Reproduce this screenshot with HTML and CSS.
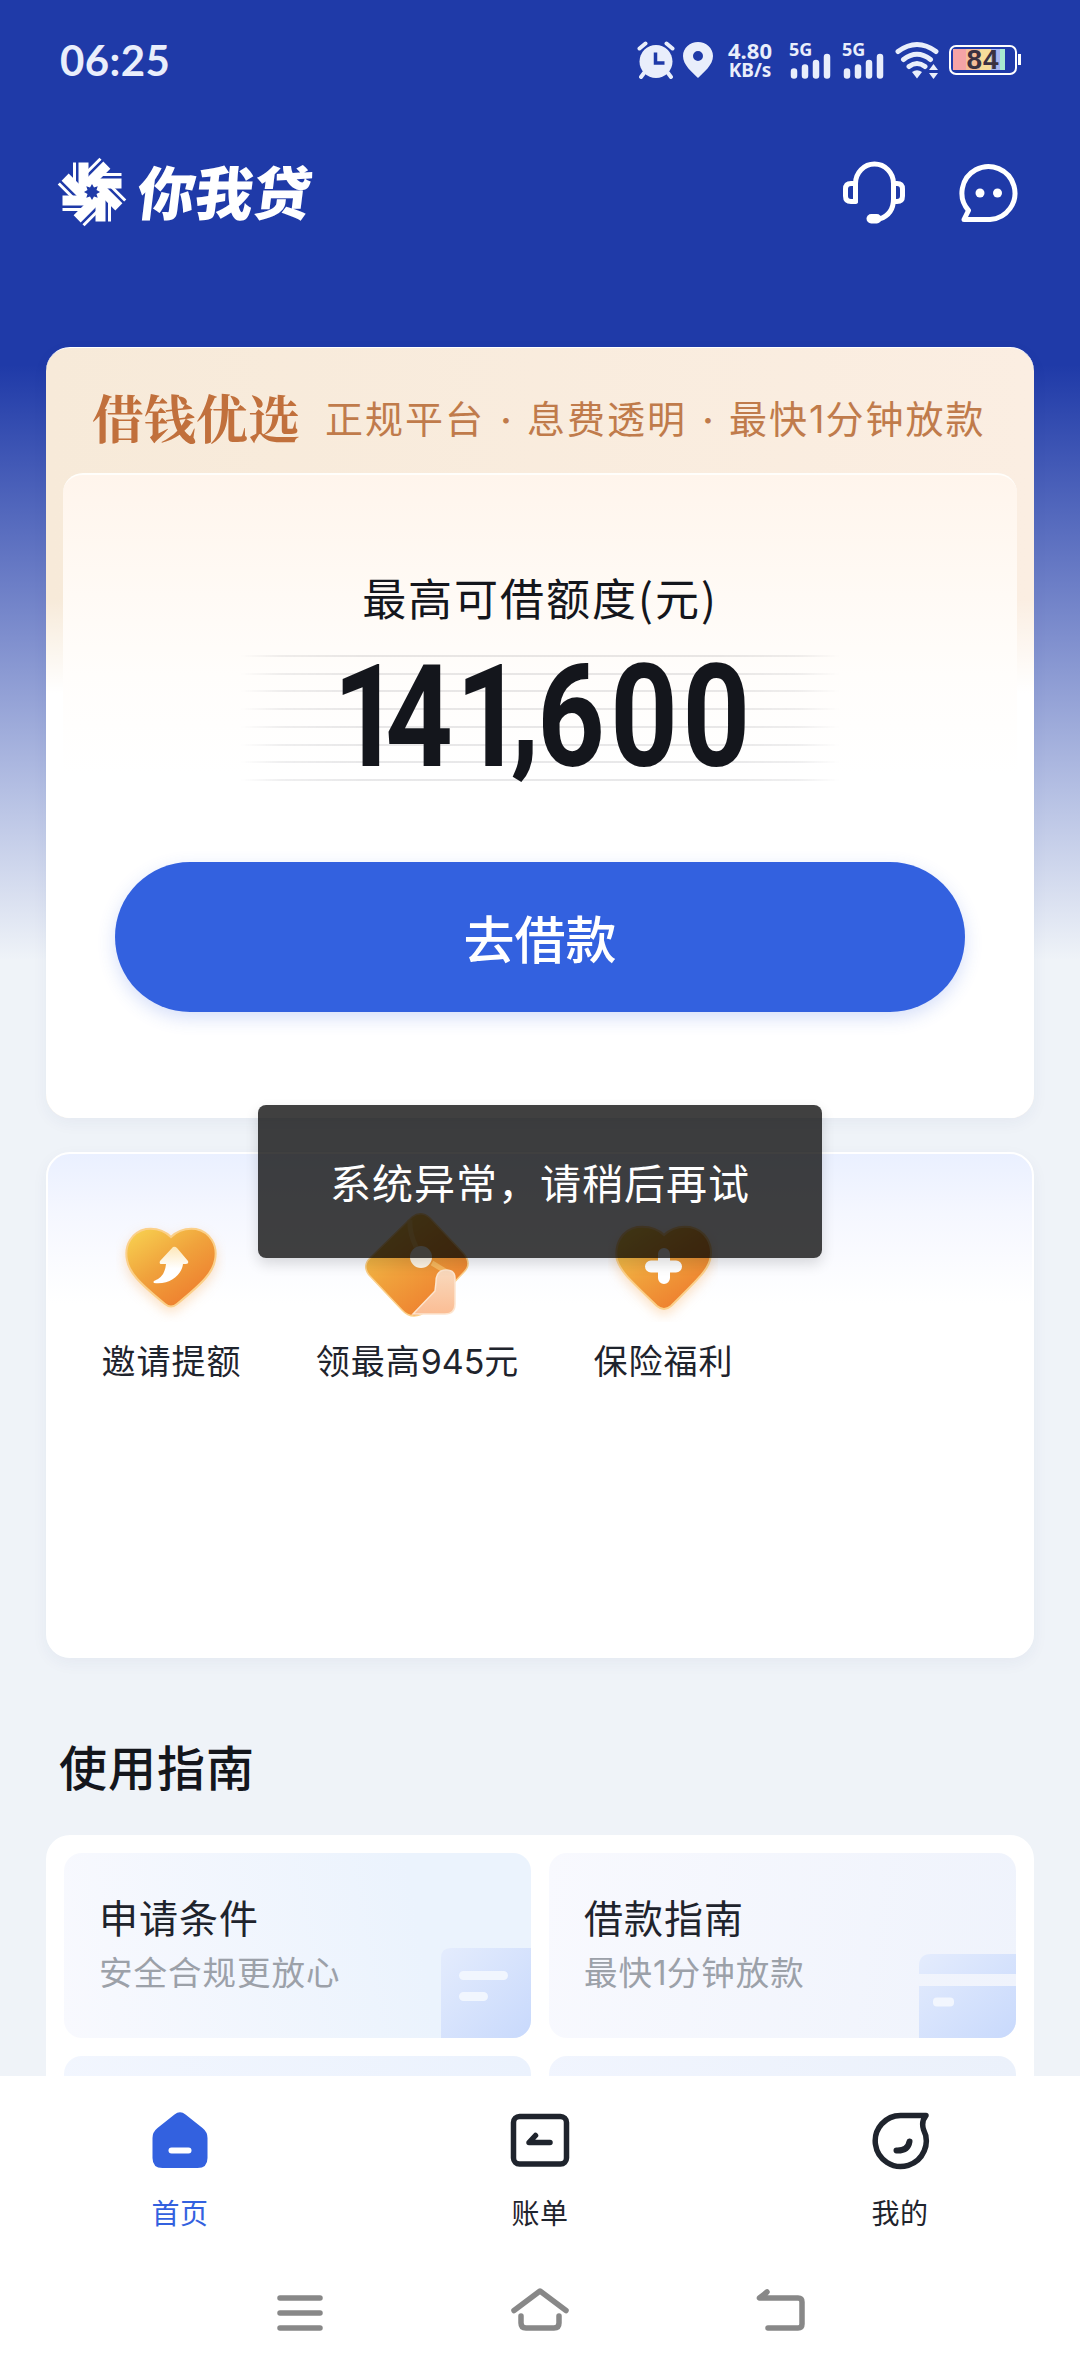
FILE: index.html
```html
<!DOCTYPE html>
<html lang="zh-CN">
<head>
<meta charset="utf-8">
<title>你我贷</title>
<link rel="stylesheet" href="styles.css">
</head>
<body>
<svg width="0" height="0" class="defs" aria-hidden="true">
  <defs>
    <linearGradient id="gold" x1="0" y1="0" x2=".75" y2="1"><stop offset="0" stop-color="#f8d552"/><stop offset=".5" stop-color="#f0a23c"/><stop offset="1" stop-color="#ee7a2d"/></linearGradient>
    <linearGradient id="arrowFill" x1="0" y1="0" x2="0" y2="1"><stop offset="0" stop-color="#fde7b8"/><stop offset=".6" stop-color="#fff"/></linearGradient>
    <linearGradient id="peach" x1="0" y1="0" x2="0" y2="1"><stop offset="0" stop-color="#f9d9bd"/><stop offset="1" stop-color="#fbbd94"/></linearGradient>
    <linearGradient id="sky" x1="0" y1="0" x2="1" y2="1"><stop offset="0" stop-color="#e4ecfd"/><stop offset="1" stop-color="#c8d9fc"/></linearGradient>
    <g id="arm"><path d="M4-19h25.5v3H4zM0-13.5h29.5v10H0z"/></g>
  </defs>
</svg>
<div class="screen">
  <main class="page">
    <header class="status">
      <span class="clock">06:25</span>
      <div class="status-icons">
        <svg class="i-alarm" width="38" height="38" viewBox="0 0 38 38"><circle cx="19" cy="20.500" r="16.500" fill="#e9eefb"/><g stroke="#e9eefb" stroke-width="4" stroke-linecap="round"><path d="M2.500 7.500l6-5M35.500 7.500l-6-5M7 32l-3 4M31 32l3 4"/></g><path d="M18.500 11.500v10.500h9" fill="none" stroke="#1f3aa8" stroke-width="3.500"/></svg>
        <svg class="i-pin" width="30" height="38" viewBox="0 0 30 38"><path fill="#e9eefb" fill-rule="evenodd" d="M15 1C7 1 0 7 0 15c0 9 9 16 15 22 6-6 15-13 15-22C30 7 23 1 15 1zm0 9a5 5 0 1 1 0 10 5 5 0 0 1 0-10z"/></svg>
        <div class="speed"><span>4.80</span><span>KB/s</span></div>
        <div class="signal"><span>5G</span><svg width="44" height="38" viewBox="0 0 44 38"><path d="M5 30.500v4M16 26.500v8M27 22v12.500M38 16v18.500" stroke="#e9eefb" stroke-width="6.500" stroke-linecap="round"/></svg></div>
        <div class="signal"><span>5G</span><svg width="44" height="38" viewBox="0 0 44 38"><path d="M5 30.500v4M16 26.500v8M27 22v12.500M38 16v18.500" stroke="#e9eefb" stroke-width="6.500" stroke-linecap="round"/></svg></div>
        <svg class="i-wifi" width="44" height="38" viewBox="0 0 44 38"><g fill="none" stroke="#e9eefb" stroke-width="5" stroke-linecap="round"><path d="M3 10.500Q22-3.500 41 10.500M8.500 18.500Q22 8 35.500 18.500M14 25.500Q22 19.500 30 25.500"/></g><path fill="#e9eefb" d="M17 31q5-3.500 10 0l-5 6.500zM34 29l4.500-6 4.500 6zM34 32h9l-4.500 6z"/></svg>
        <div class="battery"><b>84</b></div>
      </div>
    </header>
    <div class="brandbar">
      <svg class="emblem" width="72" height="72" viewBox="-36 -36 72 72"><g fill="#fff"><use href="#arm"/><use href="#arm" transform="rotate(45)"/><use href="#arm" transform="rotate(90)"/><use href="#arm" transform="rotate(135)"/><use href="#arm" transform="rotate(180)"/><use href="#arm" transform="rotate(225)"/><use href="#arm" transform="rotate(270)"/><use href="#arm" transform="rotate(315)"/></g><path fill="#1f3aa8" d="M0-8l2 3.500 3.700-1.200L4.500-2 8 0 4.500 2l1.200 3.700L2 4.500 0 8l-2-3.500-3.700 1.200L-4.500 2-8 0l3.500-2-1.200-3.700L-2-4.500z"/></svg>
      <h1 class="brand">你我贷</h1>
      <svg class="i-headset" width="66" height="64" viewBox="0 0 66 64"><g fill="none" stroke="#fff" stroke-width="5" stroke-linejoin="round" stroke-linecap="round"><path d="M14.500 40V22.500a19 19.500 0 0 1 38 0V38c0 10-5 17-14 20"/><path d="M14.500 22.500H10q-5.500 0-5.500 5.500v7q0 5.500 5.500 5.500h4.500zM52.500 22.500H56q5.500 0 5.500 5.500v7q0 5.500-5.500 5.500h-3.500"/></g><rect x="25.500" y="53" width="15" height="9.500" rx="4.700" fill="#fff"/></svg>
      <svg class="i-chat" width="62" height="62" viewBox="0 0 62 62"><path fill="none" stroke="#fff" stroke-width="5" stroke-linejoin="round" d="M6 57.500l4.500-9A26.500 26.500 0 1 1 32 57.500H6z"/><circle cx="22" cy="31" r="4.500" fill="#fff"/><circle cx="39.500" cy="31" r="4.500" fill="#fff"/></svg>
    </div>

    <section class="loan">
      <div class="loan-head"><strong>借钱优选</strong><span>正规平台<i>·</i>息费透明<i>·</i>最快<em class="num">1</em>分钟放款</span></div>
      <div class="loan-body">
        <p class="loan-label">最高可借额度(元)</p>
        <div class="amount">
          <svg width="600" height="140" viewBox="0 0 600 140"><text class="digits" transform="scale(.83 1)" x="112 175 260 326 358 446 533" y="111" dy="0 0 0 -9 9">141,600</text></svg>
        </div>
        <button class="cta">去借款</button>
      </div>
    </section>

    <section class="perks">
      <div class="perk">
        <svg width="110" height="110" viewBox="0 0 110 110"><path class="glow" fill="url(#gold)" stroke="#fbd08a" stroke-width="2" d="M55 25C63 17 72 16 80 17c14 3 22 16 19 31-2 12-11 22-38 44q-6 5-12 0C22 70 13 60 11 48 8 33 16 20 30 17c8-1 17 0 25 8z"/><path fill="url(#arrowFill)" d="M57 35q2-1 4 1l11 13q1 3-2 3h-3C66 62 55 73 38 71q-1-1 0-2 11-4 12-17h-5q-2 0-1-3z"/></svg>
        <span>邀请提额</span>
      </div>
      <div class="perk">
        <svg width="110" height="110" viewBox="0 0 110 110"><g transform="translate(2 0)"><path fill="url(#gold)" stroke="#fbd08a" stroke-width="1.500" d="M48 5q9-7 18 1l34 36q8 10 0 18l-36 38q-15 12-26 0L5 63q-7-9 1-17z"/><path fill="none" stroke="#ffd07a" stroke-opacity=".6" stroke-width="5" d="M46 8q-1 12 6 27M68 51l18 11"/><circle cx="57" cy="45" r="11" fill="#fff6e6"/><path fill="url(#peach)" stroke="#fde5cf" stroke-width="1.500" d="M72 70q0-12 10-12 9 0 9 8v26q0 10-10 10H49l22-23z"/></g></svg>
        <span>领最高<em class="num">945</em>元</span>
      </div>
      <div class="perk">
        <svg width="110" height="110" viewBox="0 0 110 110"><path class="glow" fill="url(#gold)" stroke="#fbd08a" stroke-width="2" d="M56 23C64 15 74 14 82 15c15 3 24 17 20 33-3 11-12 19-39 46q-7 6-14 0C21 67 13 60 9 48 6 32 14 18 29 15c9-1 19 0 27 8z"/><path stroke="#fff" stroke-width="12" stroke-linecap="round" d="M56 42v24M43 54.500h25"/></svg>
        <span>保险福利</span>
      </div>
    </section>

    <h2 class="section-title">使用指南</h2>
    <section class="guides">
      <article class="tile tile-a"><h3>申请条件</h3><p>安全合规更放心</p>
        <svg class="tile-art" width="90" height="90" viewBox="0 0 90 90"><path fill="url(#sky)" d="M0 10Q0 0 10 0h80v90H0z"/><path stroke="#f1f6fe" stroke-width="9" stroke-linecap="round" d="M22.500 27.500h40M22.500 48.500h20"/></svg></article>
      <article class="tile tile-b"><h3>借款指南</h3><p>最快<em class="num">1</em>分钟放款</p>
        <svg class="tile-art" width="97" height="84" viewBox="0 0 97 84"><path fill="url(#sky)" d="M0 20V12Q0 0 12 0h85v20zM0 32h97v52H0z"/><rect x="14" y="43.500" width="21" height="9" rx="4" fill="#f2f6fe"/></svg></article>
      <article class="tile tile-c"></article>
      <article class="tile tile-d"></article>
    </section>
  </main>

  <nav class="tabs">
    <a class="tab active"><svg width="60" height="60" viewBox="0 0 60 60"><path fill="#3361df" d="M24.500 4.500q5.500-4.500 11 0L52.500 18q5 4 5 10v20q0 10-10 10h-35q-10 0-10-10V28q0-6 5-10z"/><path stroke="#fff" stroke-width="6" stroke-linecap="round" d="M21.500 40.500h17"/></svg><span>首页</span></a>
    <a class="tab"><svg width="60" height="60" viewBox="0 0 60 60"><rect x="3.500" y="6.500" width="53" height="47.500" rx="6" fill="none" stroke="#1f242d" stroke-width="5.500"/><path fill="none" stroke="#1f242d" stroke-width="5.500" stroke-linecap="round" stroke-linejoin="round" d="M40 32.500H19l6.500-7"/></svg><span>账单</span></a>
    <a class="tab"><svg width="60" height="60" viewBox="0 0 60 60"><path fill="none" stroke="#1f242d" stroke-width="5.500" stroke-linejoin="round" d="M31.500 5.500H56q-5 6-2.500 14A25.500 25.500 0 1 1 31.500 5.500z"/><path fill="none" stroke="#1f242d" stroke-width="6" stroke-linecap="round" d="M26.500 40.500Q38 41 39.500 31.500"/></svg><span>我的</span></a>
  </nav>
  <div class="sysnav">
    <svg width="60" height="60" viewBox="0 0 60 60"><path stroke="#888" stroke-width="5.500" stroke-linecap="round" d="M10 16h40M10 31h40M10 46h40"/></svg>
    <svg width="60" height="60" viewBox="0 0 60 60"><g fill="none" stroke="#888" stroke-width="5.500" stroke-linecap="round" stroke-linejoin="round"><path d="M4 28.500L30 9l26 19.500M11 34v7q0 5 5 5h28q5 0 5-5v-7"/></g></svg>
    <svg width="60" height="60" viewBox="0 0 60 60"><path fill="none" stroke="#888" stroke-width="5.500" stroke-linecap="round" stroke-linejoin="round" d="M17 10l-7.500 6H48q4 0 4 4v22q0 4-4 4H18"/></svg>
  </div>
  <div class="toast">系统异常，请稍后再试</div>
</div>
</body>
</html>
```
FILE: styles.css
```css
* { box-sizing: border-box; margin: 0; padding: 0; }
body { font-family: "Noto Sans CJK SC", sans-serif; color: #14161c; }
.defs { position: absolute; }
svg { display: block; flex: none; }
.num { font-family: Inter, sans-serif; font-style: normal; line-height: 1; letter-spacing: 0; }
.screen { position: relative; width: 1080px; height: 2376px; overflow: hidden; display: flex; flex-direction: column; background: #fff; }
.page { height: 2076px; overflow: hidden; display: flex; flex-direction: column; background: linear-gradient(180deg, #1f3aa8 0, #1f3aa8 365px, #7586ca 610px, #b4bfe3 790px, #eff3f8 960px); }

.status { height: 120px; flex: none; display: flex; justify-content: space-between; padding: 41px 60px 0 60px; color: #e9eefb; }
.clock { font: 700 42px/38px Lato, sans-serif; letter-spacing: .4px; }
.status-icons { display: flex; height: 38px; }
.i-pin { margin-left: 8px; }
.speed { width: 50px; margin: 0 5px 0 12px; display: flex; flex-direction: column; align-items: center; font: 700 22px/18px "Noto Sans", sans-serif; white-space: nowrap; }
.speed span:last-child { font-size: 19px; line-height: 23px; }
.signal { position: relative; width: 44px; margin-left: 9px; }
.signal span { position: absolute; left: 0; top: 0; font: 700 18px/17px "Noto Sans", sans-serif; }
.i-wifi { margin-left: 9px; }
.battery { position: relative; width: 68px; height: 30px; margin: 4px 3px 0 10px; border: 2.5px solid #fff; border-radius: 7px; display: flex; align-items: center; justify-content: center; background: linear-gradient(90deg, #f5a3a6 0 13px, #f6bd98 13px 27px, #f7dd9a 27px 38px, #a9b5ee 38px 47px, #a8ecd0 47px 52px, transparent 52px) 2px 2px / 58px 21px no-repeat; }
.battery::after { content: ""; position: absolute; right: -5.500px; top: 7px; width: 3px; height: 11px; background: #fff; }
.battery b { font: 700 28px/26px "Liberation Sans", sans-serif; color: #3b3140; letter-spacing: 1px; }

.brandbar { height: 227px; flex: none; display: flex; align-items: flex-start; padding: 36px 60px 0 56px; }
.brand { margin: 1px auto 0 10px; font-size: 58px; line-height: 66px; font-weight: 900; color: #fff; transform: skewX(-7deg); }
.i-headset { margin: 5px 51px 0 0; }
.i-chat { margin: 6px 0 0; }

.loan { width: 988px; height: 771px; flex: none; margin: 0 46px; padding: 2px 17px 0; border-radius: 24px; background: linear-gradient(180deg, rgba(255,255,255,0) 250px, #fff 345px), linear-gradient(90deg, #f7ead9, #fbeee2); border-top: 1.500px solid #fff; box-shadow: 0 5px 16px rgba(40,60,120,.05); overflow: hidden; }
.loan-head { height: 123px; display: flex; align-items: center; padding: 11px 0 0 29px; color: #c1703c; white-space: nowrap; }
.loan-head strong { font: 700 52px/64px "Noto Serif CJK SC", "Noto Sans CJK SC", serif; }
.loan-head span { margin-left: 25px; font-size: 38px; line-height: 56px; letter-spacing: 2px; color: #c07b4b; }
.loan-head .num { margin-right: 1px; }
.loan-head i { display: inline-block; width: 42px; text-align: center; font: 600 36px/1 Inter, sans-serif; letter-spacing: 0; }
.loan-body { height: 645px; display: flex; flex-direction: column; align-items: center; border-radius: 20px 20px 0 0; border-top: 2px solid #fffefb; background: linear-gradient(180deg, #fff5ec, #fffaf5 120px, #fffdfb 200px, #fff 300px); }
.loan-label { margin-top: 90px; font-size: 44px; line-height: 64px; letter-spacing: 2px; }
.amount { position: relative; width: 600px; height: 126px; margin-top: 26px; }
.amount::before { content: ""; position: absolute; inset: 0; background: repeating-linear-gradient(180deg, rgba(80,80,90,.13) 0 2px, transparent 2px 17.700px); mask-image: linear-gradient(90deg, transparent, rgba(0,0,0,.7) 7%, #000 20%, #000 80%, rgba(0,0,0,.7) 93%, transparent); }
.amount svg { position: relative; overflow: visible; }
.digits { font: 700 142px Roboto, sans-serif; fill: #14161c; }
.cta { width: 850px; height: 150px; margin-top: 81px; border: 0; border-radius: 75px; background: #3361df; color: #fff; font: 500 51px/74px "Noto Sans CJK SC", sans-serif; box-shadow: 0 6px 18px rgba(51,97,223,.2); }

.perks { width: 988px; height: 506px; flex: none; margin: 34px 46px 0; padding-top: 58px; display: grid; grid-template-columns: repeat(4, 246px); align-content: start; border: 2px solid #fff; border-radius: 24px; background: linear-gradient(180deg, #eaf0ff 0, #f5f7ff 60px, #fff 150px); box-shadow: 0 5px 16px rgba(40,60,120,.05); }
.perk { display: flex; flex-direction: column; align-items: center; }
.perk span { margin-top: 13px; padding-left: 1px; font-size: 34px; line-height: 50px; letter-spacing: 1px; color: #1f242d; white-space: nowrap; }
.glow { filter: drop-shadow(0 5px 6px rgba(245,160,70,.3)); }

.section-title { margin: 73px 0 0 59px; font-size: 48px; line-height: 68px; font-weight: 500; letter-spacing: 1px; }
.guides { width: 988px; flex: none; margin: 36px 46px 0; padding: 18px; display: grid; grid-template-columns: 467px 467px; grid-auto-rows: 185px; gap: 18px; background: #fff; border-radius: 24px; }
.tile { position: relative; overflow: hidden; border-radius: 18px; padding: 35px 0 0 35px; background: linear-gradient(100deg, #f8f9fe, #eff3fc); }
.tile-a { background: linear-gradient(80deg, #f8f9fe, #ebf3fd 75%); }
.tile-c { background: linear-gradient(80deg, #f2f6fe, #ebf2fd); }
.tile-d { background: linear-gradient(80deg, #f1f5fe, #ebf1fb); }
.tile h3 { font-size: 39px; line-height: 56px; font-weight: 400; letter-spacing: 1px; color: #1f242d; }
.tile p { margin-top: 2px; font-size: 33.500px; line-height: 50px; letter-spacing: 1px; color: #9ca1a9; }
.tile-art { position: absolute; right: 0; bottom: 0; }

.tabs { height: 184px; flex: none; display: grid; grid-template-columns: repeat(3, 360px); background: #fff; }
.tab { display: flex; flex-direction: column; align-items: center; padding-top: 34px; color: #1f242d; }
.tab span { margin-top: 21px; font-size: 28px; line-height: 42px; letter-spacing: .5px; }
.tab.active { color: #3361df; }
.sysnav { height: 116px; flex: none; display: flex; justify-content: space-between; padding: 22px 270px 0; background: #fff; }

.toast { position: absolute; left: 258px; top: 1105px; width: 564px; height: 153px; border-radius: 8px; background: rgba(0,0,0,.75); color: #fff; font-size: 41px; line-height: 152px; text-align: center; letter-spacing: 1px; white-space: nowrap; box-shadow: 0 6px 14px rgba(0,0,0,.14); }
```
